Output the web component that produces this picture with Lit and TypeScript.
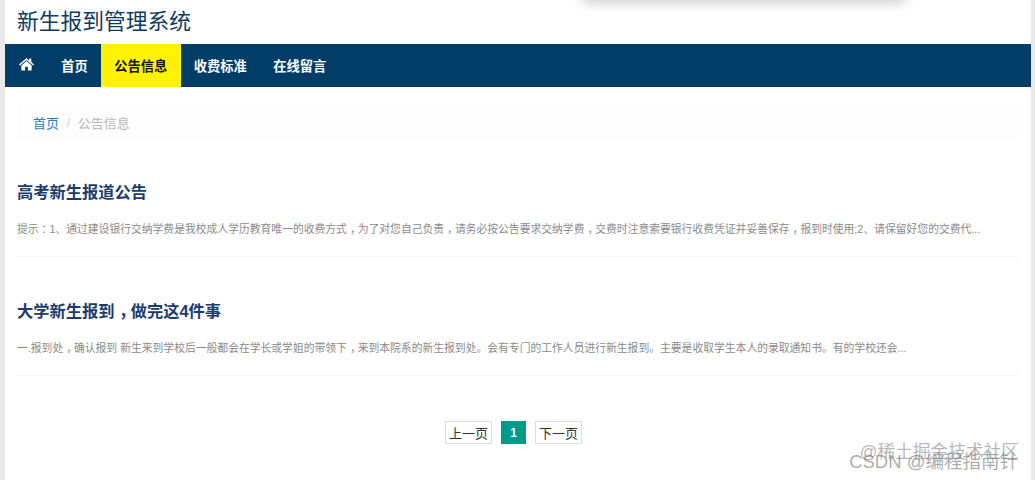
import { LitElement, html, css } from "lit";
import { customElement } from "lit/decorators.js";

const items = [
  {
    title: "高考新生报道公告",
    text: "提示：1、通过建设银行交纳学费是我校成人学历教育唯一的收费方式，为了对您自己负责，请务必按公告要求交纳学费，交费时注意索要银行收费凭证并妥善保存，报到时使用;2、请保留好您的交费代...",
  },
  {
    title: "大学新生报到，做完这4件事",
    text: "一.报到处，确认报到 新生来到学校后一般都会在学长或学姐的带领下，来到本院系的新生报到处。会有专门的工作人员进行新生报到。主要是收取学生本人的录取通知书。有的学校还会...",
  },
];

const punct = (s: string) =>
  s.split(/([，：])/).map((part) =>
    part === "，" || part === "：" ? html`<span class="pt">${part}</span>` : part
  );

@customElement("app-root")
export class AppRoot extends LitElement {
  static styles = css`
    :host {
      display: block;
      position: relative;
      width: 1035px;
      height: 480px;
      overflow: hidden;
      background: #e9e9e9;
      font-family: "Liberation Sans", "Noto Sans CJK SC", sans-serif;
    }
    .page {
      margin: 0 4px 0 5px;
      height: 480px;
      background: #fff;
      overflow: hidden;
    }
    .brand {
      height: 44px;
      padding: 8px 12px 0;
      box-sizing: border-box;
      font-size: 21.75px;
      line-height: 28px;
      color: #0d3c5e;
    }
    .nav {
      display: flex;
      height: 43px;
      background: #023d67;
    }
    .nav a {
      display: flex;
      align-items: center;
      padding: 0 13.25px;
      font-size: 13.25px;
      font-weight: 700;
      color: #fff;
    }
    .nav a.home {
      padding: 0 14px;
      width: 15px;
    }
    .nav a.active {
      background: #fff200;
      color: #111;
    }
    .nav svg {
      width: 15px;
      height: 14px;
      margin-top: -3px;
    }
    .crumb {
      margin: 18px 14px 0 12px;
      height: 35px;
      padding: 0 0 1px 16px;
      box-sizing: border-box;
      display: flex;
      align-items: center;
      gap: 7.6px;
      background: #fdfdfd;
      font-size: 13px;
      color: #b9b9b9;
    }
    .crumb a {
      color: #1f83c4;
    }
    .crumb .sep {
      color: #cfcfcf;
    }
    .list {
      margin: 0 12px;
      padding-top: 40px;
    }
    .item {
      height: 77px;
      margin-bottom: 42px;
      border-bottom: 1px solid #f3f3f3;
      box-sizing: border-box;
    }
    .item h3 {
      margin: 0;
      font-size: 16.25px;
      line-height: 24px;
      font-weight: 700;
      color: #1c3c6c;
    }
    .item p {
      margin: 16px 0 0;
      font-size: 10.8px;
      line-height: 18px;
      color: #8a8a8a;
      white-space: nowrap;
    }
    .pt {
      display: inline-block;
      transform: translateX(0.28em);
    }
    .pager {
      display: flex;
      justify-content: center;
      gap: 9px;
      margin-top: 45px;
      padding-right: 9px;
    }
    .pager a {
      height: 23px;
      box-sizing: border-box;
      display: flex;
      align-items: center;
      justify-content: center;
      font-size: 13px;
      color: #333;
      border: 1px solid #ddd;
      width: 47px;
    }
    .pager a.cur {
      width: 25px;
      background: #009a8b;
      border-color: #009a8b;
      color: #fff;
      font-weight: 700;
      font-size: 12px;
    }
    .popup {
      position: absolute;
      left: 585px;
      top: -20px;
      width: 318px;
      height: 20px;
      background: #fff;
      box-shadow: 0 1px 12px 2px rgba(0, 0, 0, 0.2);
    }
    .mark {
      position: absolute;
      right: 16px;
      white-space: nowrap;
      line-height: 18px;
      pointer-events: none;
    }
    .mark.a {
      top: 443px;
      font-size: 17.7px;
      color: rgba(110, 110, 110, 0.5);
    }
    .mark.b {
      top: 453px;
      font-size: 18.5px;
      right: 17px;
      color: rgba(90, 90, 90, 0.5);
    }
  `;

  render() {
    return html`
      <div class="page">
        <div class="brand">新生报到管理系统</div>
        <nav class="nav">
          <a class="home">
            <svg viewBox="0 0 16 14" fill="#fff">
              <path d="M8 0.6 0 7.4l1 1.2L8 2.7l7 5.9 1-1.2-2.9-2.5V1.2h-2.2v2.2L8 0.6z" />
              <path d="M8 3.9 2.5 8.5V14h4V10h3v4h4V8.5L8 3.9z" />
            </svg>
          </a>
          <a>首页</a>
          <a class="active">公告信息</a>
          <a>收费标准</a>
          <a>在线留言</a>
        </nav>
        <div class="crumb">
          <a>首页</a><span class="sep">/</span><span>公告信息</span>
        </div>
        <div class="list">
          ${items.map(
            (i) => html`
              <div class="item">
                <h3>${punct(i.title)}</h3>
                <p>${punct(i.text)}</p>
              </div>
            `
          )}
        </div>
        <div class="pager">
          <a>上一页</a>
          <a class="cur">1</a>
          <a>下一页</a>
        </div>
      </div>
      <div class="popup"></div>
      <div class="mark a">@稀土掘金技术社区</div>
      <div class="mark b">CSDN @编程指南针</div>
    `;
  }
}
